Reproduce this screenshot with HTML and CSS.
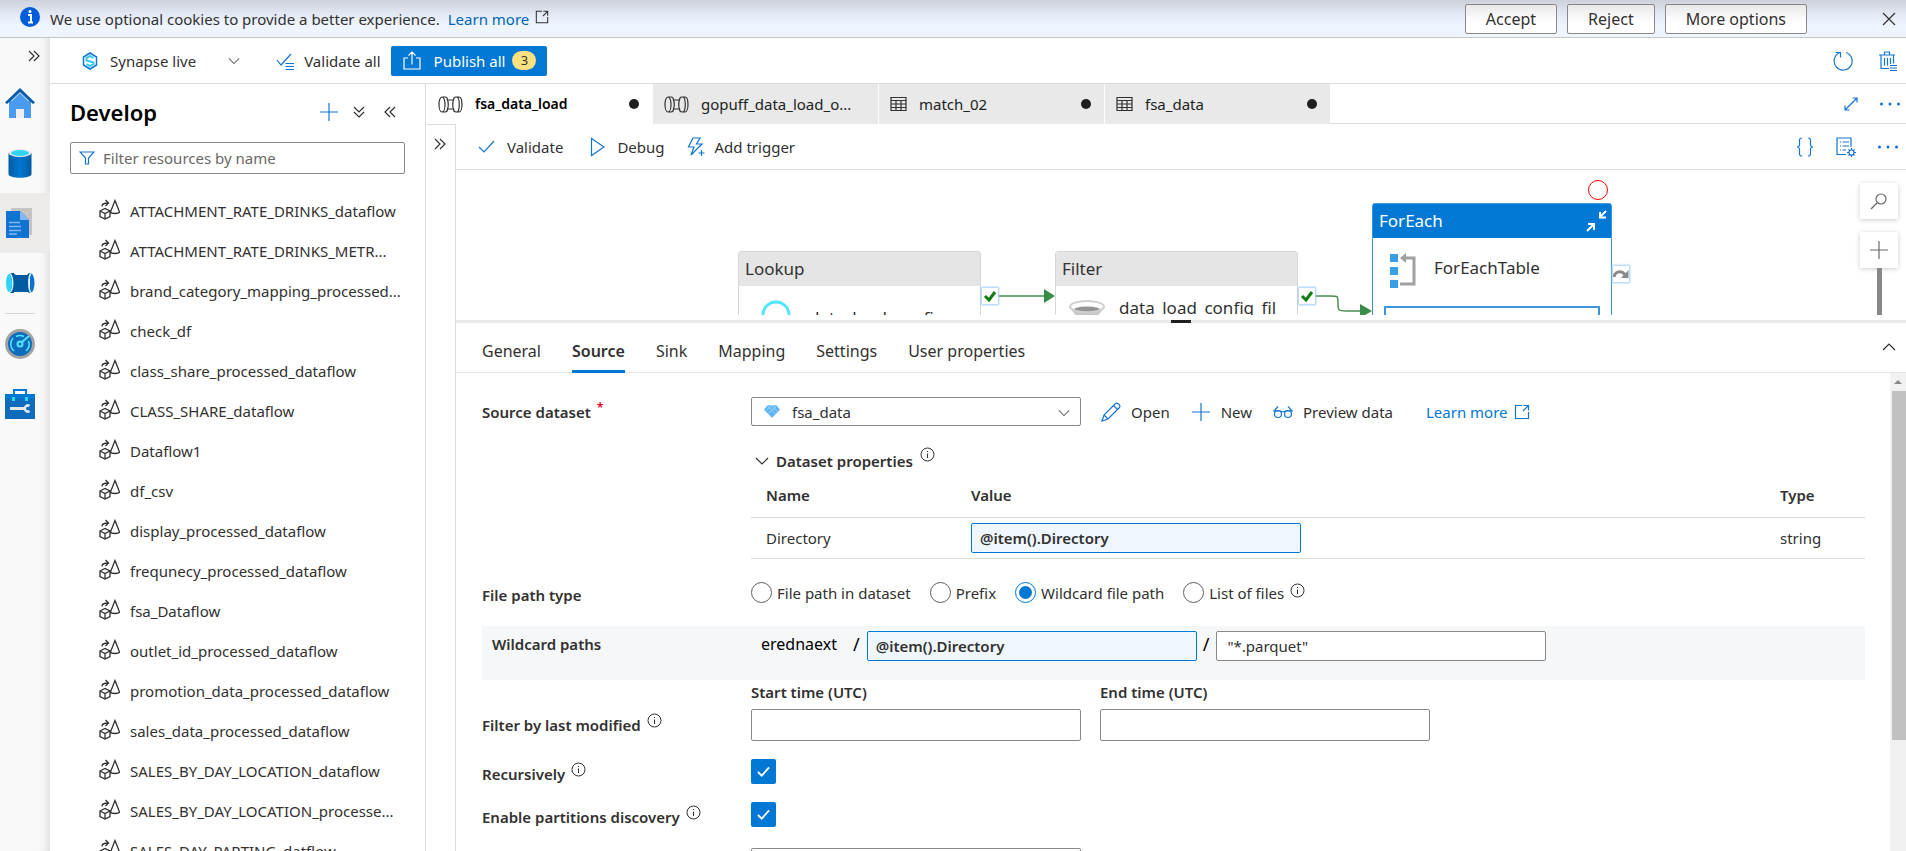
FILE: index.html
```html
<!DOCTYPE html>
<html lang="en">
<head>
    <meta charset="UTF-8">
    <meta name="viewport" content="width=device-width, initial-scale=1.0">
    <title>fsa_data_load - Synapse Analytics</title>
    <link rel="stylesheet" href="styles.css">
</head>
<body>
    <!-- Shared icons -->
    <svg class="sprite" aria-hidden="true">
        <symbol id="i-dataflow" viewBox="0 0 21 21">
            <path d="M1 12l5-2.500 5 2.500v5.500L6 20l-5-2.500zM1 12l5 2.500 5-2.500M6 14.500V20M16 1.500L11.500 13c1 2 8 2 9 0zM3 7.500c0-3 2-3.500 6-3.500M6.500 1L9.500 4 6.500 7"/>
        </symbol>
        <symbol id="i-pipeline" viewBox="0 0 25 17">
            <path d="M4 1C0 1 0 16 4 16S8 1 4 1zM4 1h3c2 0 2.500 2 2.500 3h6c0-1 .5-3 2.500-3h3c4 0 4 15 0 15h-3c-2 0-2.500-2-2.500-3h-6c0 1-.5 3-2.500 3H4M9.500 4c1 2 1 7 0 9M15.500 4c-1 2-1 7 0 9M19 1c3 1 3 14 0 15"/>
        </symbol>
        <symbol id="i-table" viewBox="0 0 17 16">
            <path d="M1 1.500h15v13H1zM1 4.500h15M1 8h15M1 11.500h15M6 4.500v10M11 4.500v10"/>
        </symbol>
        <symbol id="i-info" viewBox="0 0 15 15">
            <circle cx="7.500" cy="7.500" r="6.500"/>
            <path d="M7.500 6.500v4.500M7.500 4v1"/>
        </symbol>
        <symbol id="i-external" viewBox="0 0 16 16">
            <path d="M8 1.500H1.500v13h13V8M9.500 1.500h5v5M14.500 1.500L9 7"/>
        </symbol>
        <symbol id="i-down" viewBox="0 0 14 8">
            <path d="M1 1l6 6 6-6"/>
        </symbol>
        <symbol id="i-double" viewBox="0 0 12 12">
            <path d="M1 1l5 5-5 5M6 1l5 5-5 5"/>
        </symbol>
        <symbol id="i-plus" viewBox="0 0 20 20">
            <path d="M10 1v18M1 10h18"/>
        </symbol>
        <symbol id="i-dots" viewBox="0 0 20 4">
            <path d="M0 2a1.500 1.500 0 1 0 3 0 1.500 1.500 0 1 0-3 0M8.500 2a1.500 1.500 0 1 0 3 0 1.500 1.500 0 1 0-3 0M17 2a1.500 1.500 0 1 0 3 0 1.500 1.500 0 1 0-3 0"/>
        </symbol>
    </svg>

    <div class="cookie-bar">
        <svg class="cookie-info" viewBox="0 0 20 20">
            <circle cx="10" cy="10" r="10" fill="#015cda"/>
            <path d="M8 8h3v7M8 15.500h5" fill="none" stroke="#fff" stroke-width="2"/>
            <circle cx="10" cy="4.500" r="1.500" fill="#fff"/>
        </svg>
        <span>We use optional cookies to provide a better experience.</span>
        <a href="#" class="cookie-link">Learn more</a>
        <svg class="line-icon cookie-external"><use href="#i-external"/></svg>
        <div class="cookie-actions">
            <button type="button">Accept</button>
            <button type="button">Reject</button>
            <button type="button">More options</button>
        </div>
        <button type="button" class="icon-btn cookie-close" aria-label="Close">
            <svg class="line-icon" width="14" height="14" viewBox="0 0 14 14"><path d="M1 1l12 12M13 1L1 13"/></svg>
        </button>
    </div>

    <div class="app">
        <nav class="rail">
            <button type="button" class="rail-expand" aria-label="Expand">
                <svg class="line-icon dbl"><use href="#i-double"/></svg>
            </button>
            <a href="#" class="rail-item" aria-label="Home">
                <svg viewBox="0 0 30 30">
                    <path d="M4 13h22v17H4z" fill="#4a9af0"/>
                    <path d="M4 15L15 4l11 11v-2L15 2 4 12z" fill="#3e8ee6"/>
                    <path d="M5 15L15 5l10 10z" fill="#4a9af0"/>
                    <path d="M0 14.500L15 0l15 14.500-2 1.500L15 4 2 16z" fill="#0a5ca8"/>
                    <path d="M11 21h8v9h-8z" fill="#efefef"/>
                </svg>
            </a>
            <a href="#" class="rail-item" aria-label="Data">
                <svg viewBox="0 0 30 30">
                    <defs>
                        <linearGradient id="g-db" x1="0" x2="1"><stop offset="0" stop-color="#005ba1"/><stop offset=".5" stop-color="#0078d4"/><stop offset="1" stop-color="#005ba1"/></linearGradient>
                    </defs>
                    <path d="M3.500 5v21c0 5 23 5 23 0V5z" fill="url(#g-db)"/>
                    <ellipse cx="15" cy="5" rx="11.500" ry="4" fill="#e8e8e8"/>
                    <ellipse cx="15" cy="5" rx="9" ry="3" fill="#32d4f5"/>
                </svg>
            </a>
            <a href="#" class="rail-item selected" aria-label="Develop">
                <svg viewBox="0 0 30 30">
                    <path d="M6 0h21v27H6z" fill="#c4c4c4"/>
                    <path d="M1 3h14l9 9v18H1z" fill="#0f74d1"/>
                    <path d="M15 3l9 9h-9z" fill="#83b9f9"/>
                    <path d="M4 14.500h11M4 18.500h12M4 22.500h12M4 26h8" stroke="#83b9f9" stroke-width="1.500"/>
                </svg>
            </a>
            <a href="#" class="rail-item" aria-label="Integrate">
                <svg viewBox="0 0 30 30">
                    <path d="M9 7h14v17H9z" fill="#005ba1"/>
                    <path d="M4 5h5v20H4zM25 5c6 0 6 20 0 20z" fill="#0f74d1"/>
                    <path d="M4 5h4l3 2h11l2-2h2c-3 5-3 15 0 20h-2l-2-2H11l-3 2H4c5-4 5-16 0-20z" fill="#005ba1"/>
                    <path d="M4 5c5 3 5 17 0 20M26 5c-3 4-3 16 0 20" fill="none" stroke="#d6ecff" stroke-width="1.500"/>
                    <ellipse cx="4" cy="15" rx="3" ry="9" fill="#32d4f5"/>
                </svg>
            </a>
            <hr class="rail-line">
            <a href="#" class="rail-item" aria-label="Monitor">
                <svg viewBox="0 0 30 30">
                    <circle cx="15" cy="15" r="15" fill="#a3a3a3"/>
                    <circle cx="15" cy="15" r="12" fill="#0f6cbd"/>
                    <path d="M9 22a9 9 0 0 1-1-13M11 7.500a9 9 0 0 1 8 0M23.500 12a9 9 0 0 1-2.500 10" fill="none" stroke="#50e6ff" stroke-width="1.500"/>
                    <circle cx="15" cy="15" r="2.500" fill="none" stroke="#50e6ff" stroke-width="2"/>
                    <path d="M17 13l7-6" stroke="#50e6ff" stroke-width="2"/>
                </svg>
            </a>
            <a href="#" class="rail-item" aria-label="Manage">
                <svg viewBox="0 0 30 30">
                    <path d="M9 6V1h12v5" fill="none" stroke="#0078d4" stroke-width="2"/>
                    <path d="M0 5h30v25H0z" fill="#0f6cbd"/>
                    <path d="M0 5h30v5H0z" fill="#0078d4"/>
                    <path d="M7 8h3v4H7zM20 8h3v4h-3z" fill="#32d4f5"/>
                    <path d="M5 19.500h14" fill="none" stroke="#e6e6e6" stroke-width="3"/>
                    <path d="M24.500 17a3 3 0 1 0 0 5" fill="none" stroke="#e6e6e6" stroke-width="2.500"/>
                </svg>
            </a>
        </nav>

        <div class="main">
            <header class="topbar">
                <button type="button" class="icon-btn live-mode">
                    <svg width="16" height="18" viewBox="0 0 16 18">
                        <path d="M8 1l6.500 4v8L8 17l-6.500-4V5z" fill="#fff" stroke="#0f78d4" stroke-width="1.500"/>
                        <path d="M11.500 6L8 4 4.500 6v2.500l7 2V12L8 14l-3.500-2" fill="none" stroke="#32c8f0" stroke-width="2"/>
                    </svg>
                    <span>Synapse live</span>
                    <svg class="line-icon muted chev"><use href="#i-down"/></svg>
                </button>
                <button type="button" class="icon-btn validate-all">
                    <svg class="line-icon blue" width="18" height="18" viewBox="0 0 18 18"><path d="M1 8l4 5L15 2M9.500 11.500H18M9.500 14.500H18M9.500 17.500H18"/></svg>
                    <span>Validate all</span>
                </button>
                <button type="button" class="publish">
                    <svg class="line-icon" width="18" height="20" viewBox="0 0 18 20"><path d="M5 7H1v11h16V7h-4M9 13.500V1M5.500 4.500L9 1l3.500 3.500"/></svg>
                    <span>Publish all</span>
                    <span class="badge">3</span>
                </button>
                <div class="topbar-right">
                    <button type="button" class="icon-btn" aria-label="Refresh">
                        <svg class="line-icon blue" width="20" height="20" viewBox="0 0 20 20"><path d="M13 1.500a9 9 0 1 1-6.500.3M2.500 1.500h5v5"/></svg>
                    </button>
                    <button type="button" class="icon-btn" aria-label="Discard all">
                        <svg class="line-icon blue" width="20" height="20" viewBox="0 0 20 20"><path d="M1 4h16M6.500 4V1h5v3M3 4v13.500h8M15.500 4v8.500M6.500 7v7.500M9.500 7v7.500M12.500 7v6M12 14.500h7M12 17h7M12 19.500h7"/></svg>
                    </button>
                </div>
            </header>

            <div class="body">
                <aside class="develop">
                    <div class="develop-head">
                        <h1>Develop</h1>
                        <button type="button" class="icon-btn" aria-label="Add"><svg class="line-icon blue" width="20" height="20"><use href="#i-plus"/></svg></button>
                        <button type="button" class="icon-btn" aria-label="Expand all"><svg class="line-icon dbl turn-down"><use href="#i-double"/></svg></button>
                        <button type="button" class="icon-btn" aria-label="Collapse"><svg class="line-icon dbl turn-left"><use href="#i-double"/></svg></button>
                    </div>
                    <div class="filter">
                        <svg class="line-icon blue" width="16" height="14" viewBox="0 0 16 14"><path d="M1 1h14L9.500 7v6h-3V7z"/></svg>
                        <input type="text" placeholder="Filter resources by name" aria-label="Filter resources by name">
                    </div>
                    <ul class="tree">
                        <li><svg><use href="#i-dataflow"/></svg><span>ATTACHMENT_RATE_DRINKS_dataflow</span></li>
                        <li><svg><use href="#i-dataflow"/></svg><span>ATTACHMENT_RATE_DRINKS_METR...</span></li>
                        <li><svg><use href="#i-dataflow"/></svg><span>brand_category_mapping_processed...</span></li>
                        <li><svg><use href="#i-dataflow"/></svg><span>check_df</span></li>
                        <li><svg><use href="#i-dataflow"/></svg><span>class_share_processed_dataflow</span></li>
                        <li><svg><use href="#i-dataflow"/></svg><span>CLASS_SHARE_dataflow</span></li>
                        <li><svg><use href="#i-dataflow"/></svg><span>Dataflow1</span></li>
                        <li><svg><use href="#i-dataflow"/></svg><span>df_csv</span></li>
                        <li><svg><use href="#i-dataflow"/></svg><span>display_processed_dataflow</span></li>
                        <li><svg><use href="#i-dataflow"/></svg><span>frequnecy_processed_dataflow</span></li>
                        <li><svg><use href="#i-dataflow"/></svg><span>fsa_Dataflow</span></li>
                        <li><svg><use href="#i-dataflow"/></svg><span>outlet_id_processed_dataflow</span></li>
                        <li><svg><use href="#i-dataflow"/></svg><span>promotion_data_processed_dataflow</span></li>
                        <li><svg><use href="#i-dataflow"/></svg><span>sales_data_processed_dataflow</span></li>
                        <li><svg><use href="#i-dataflow"/></svg><span>SALES_BY_DAY_LOCATION_dataflow</span></li>
                        <li><svg><use href="#i-dataflow"/></svg><span>SALES_BY_DAY_LOCATION_processe...</span></li>
                        <li><svg><use href="#i-dataflow"/></svg><span>SALES_DAY_PARTING_datflow</span></li>
                    </ul>
                </aside>

                <div class="workspace">
                    <div class="tabs">
                        <button type="button" class="tab active"><svg class="line-icon" width="25" height="17"><use href="#i-pipeline"/></svg><span>fsa_data_load</span><i class="dot"></i></button>
                        <button type="button" class="tab"><svg class="line-icon" width="25" height="17"><use href="#i-pipeline"/></svg><span>gopuff_data_load_o...</span></button>
                        <button type="button" class="tab"><svg class="line-icon" width="17" height="16"><use href="#i-table"/></svg><span>match_02</span><i class="dot"></i></button>
                        <button type="button" class="tab"><svg class="line-icon" width="17" height="16"><use href="#i-table"/></svg><span>fsa_data</span><i class="dot"></i></button>
                        <div class="tabs-rest">
                            <button type="button" class="icon-btn" aria-label="Full screen">
                                <svg class="line-icon blue" width="14" height="14" viewBox="0 0 14 14"><path d="M1 13L13 1M8.500 1H13v4.500M1 8.500V13h4.500"/></svg>
                            </button>
                            <button type="button" class="icon-btn" aria-label="More"><svg class="dots"><use href="#i-dots"/></svg></button>
                        </div>
                    </div>

                    <div class="editor-wrap">
                        <div class="activities">
                            <button type="button" class="icon-btn" aria-label="Show activities"><svg class="line-icon dbl"><use href="#i-double"/></svg></button>
                        </div>
                        <div class="editor">
                            <div class="editor-bar">
                                <button type="button" class="icon-btn">
                                    <svg class="line-icon blue" width="17" height="14" viewBox="0 0 17 14"><path d="M1 7l5 5L16 1"/></svg>
                                    <span>Validate</span>
                                </button>
                                <button type="button" class="icon-btn">
                                    <svg class="line-icon blue" width="15" height="20" viewBox="0 0 15 20"><path d="M1.500 1.500L14 10 1.500 18.500z"/></svg>
                                    <span>Debug</span>
                                </button>
                                <button type="button" class="icon-btn trigger">
                                    <svg class="line-icon blue" width="18" height="20" viewBox="0 0 18 20"><path d="M6 1h7L9.500 7H15L4 18l3-8H1.500zM14.500 13v6M11.500 16h6"/></svg>
                                    <span>Add trigger</span>
                                </button>
                                <div class="editor-bar-right">
                                    <button type="button" class="icon-btn" aria-label="Code">
                                        <svg class="line-icon blue" width="18" height="20" viewBox="0 0 18 20"><path d="M6 1C2 1 4 5 3.500 8 3.300 9.500 2.500 10 1 10c1.500 0 2.300.5 2.500 2C4 15 2 19 6 19M12 1c4 0 2 4 2.500 7 .2 1.500 1 2 2.500 2-1.500 0-2.300.5-2.500 2-.5 3 1.500 7-2.500 7"/></svg>
                                    </button>
                                    <button type="button" class="icon-btn" aria-label="Properties">
                                        <svg class="line-icon blue" width="20" height="20" viewBox="0 0 20 20"><path d="M10 17.500H1V1h14v9M4 5h1M6.500 5H13M4 9h1M6.500 9H13M4 13h1M6.500 13H10"/><circle cx="15.500" cy="15.500" r="2.500"/><path d="M15.500 11v2M15.500 18v2M11 15.500h2M18 15.500h2M12.500 12.500l1 1M18.500 18.500l-1-1M12.500 18.500l1-1M18.500 12.500l-1 1"/></svg>
                                    </button>
                                    <button type="button" class="icon-btn" aria-label="More"><svg class="dots"><use href="#i-dots"/></svg></button>
                                </div>
                            </div>

                            <div class="canvas">
                                <svg class="links" width="1000" height="145" viewBox="0 0 1000 145">
                                    <path d="M542 126h48M859 126h15c8 0 8 0 8 7s0 8 8 8h16" fill="none" stroke="#498f52" stroke-width="1.500"/>
                                    <path d="M588 119l11 7-11 7zM904 134l12 7-12 7z" fill="#388e48"/>
                                </svg>
                                <div class="node node-lookup">
                                    <div class="node-head">Lookup</div>
                                    <div class="node-body">
                                        <svg width="30" height="40" viewBox="0 0 30 40"><circle cx="15" cy="15" r="13" fill="none" stroke="#50e6ff" stroke-width="3"/><path d="M15 28v10" stroke="#198ab3" stroke-width="3"/></svg>
                                        <span>data_load_config</span>
                                    </div>
                                </div>
                                <div class="node node-filter">
                                    <div class="node-head">Filter</div>
                                    <div class="node-body">
                                        <svg width="36" height="40" viewBox="0 0 36 40"><path d="M0 7l14 17v14h8V24L36 7z" fill="#c8c8c8"/><ellipse cx="18" cy="6.500" rx="17" ry="5.500" fill="#fff" stroke="#d0d0d0" stroke-width="2"/><path d="M5 9c4-3.500 22-3.500 26 0-5 3-21 3-26 0z" fill="#949494"/></svg>
                                        <span>data_load_config_fil ter</span>
                                    </div>
                                </div>
                                <svg class="check check-1" viewBox="0 0 16 16"><path d="M3 8l4 4 6-8" fill="none" stroke="#107c10" stroke-width="3"/></svg>
                                <svg class="check check-2" viewBox="0 0 16 16"><path d="M3 8l4 4 6-8" fill="none" stroke="#107c10" stroke-width="3"/></svg>
                                <i class="breakpoint"></i>
                                <div class="node node-foreach">
                                    <div class="node-head">
                                        <span>ForEach</span>
                                        <svg width="21" height="22" viewBox="0 0 21 22"><path d="M20 1l-6 6M14 2v5.500h6M1 21l7-7M2 14h6v6" fill="none" stroke="#fff" stroke-width="2"/></svg>
                                    </div>
                                    <div class="node-body">
                                        <svg width="26" height="35" viewBox="0 0 26 35"><path d="M0 1h8v8H0zM0 14h8v8H0zM0 27h8v8H0z" fill="#3a9be6"/><path d="M15 5h9v26H10" fill="none" stroke="#a0a0a0" stroke-width="3"/><path d="M10 5l6-5v10z" fill="#a0a0a0"/></svg>
                                        <span>ForEachTable</span>
                                    </div>
                                    <div class="node-inner"></div>
                                </div>
                                <svg class="check check-skip" viewBox="0 0 16 16"><path d="M1 11c1-6 8-7 11-2" fill="none" stroke="#8a8a8a" stroke-width="3"/><path d="M15.500 4v8H8z" fill="#8a8a8a"/></svg>
                                <div class="zoom-tools">
                                    <button type="button" aria-label="Search"><svg class="line-icon muted" width="18" height="18" viewBox="0 0 18 18"><circle cx="11" cy="7" r="5"/><path d="M7.500 10.500L1 17"/></svg></button>
                                    <button type="button" aria-label="Zoom in"><svg class="line-icon muted" width="20" height="20"><use href="#i-plus"/></svg></button>
                                    <i class="zoom-track"></i>
                                </div>
                            </div>

                            <div class="splitter"><i></i></div>

                            <div class="prop-tabs">
                                <button type="button">General</button>
                                <button type="button" class="active">Source</button>
                                <button type="button">Sink</button>
                                <button type="button">Mapping</button>
                                <button type="button">Settings</button>
                                <button type="button">User properties</button>
                                <button type="button" class="collapse" aria-label="Collapse"><svg class="line-icon chev-up"><use href="#i-down"/></svg></button>
                            </div>

                            <div class="prop-pane">
                                <form class="props">
                                    <div class="row">
                                        <label class="name" for="dataset">Source dataset <sup class="req">*</sup></label>
                                        <div class="select-box">
                                            <svg class="ds-icon" viewBox="0 0 18 14"><path d="M4 0h10l4 5-9 9-9-9z" fill="#5db4f5"/><path d="M4 1l9 9M9 0l6 7M14 1L5 9M9 0L2 6" stroke="#a5d6fb" stroke-width="1"/></svg>
                                            <select id="dataset"><option>fsa_data</option></select>
                                            <svg class="line-icon muted select-chev"><use href="#i-down"/></svg>
                                        </div>
                                        <div class="dataset-actions">
                                            <button type="button" class="icon-btn">
                                                <svg class="line-icon blue" width="20" height="20" viewBox="0 0 20 20"><path d="M1 19l2-6L14.500 1.500c2-1.500 5.500 2 4 4L7 17zM12.500 3.500l4 4M3 13l4 4"/></svg>
                                                <span>Open</span>
                                            </button>
                                            <button type="button" class="icon-btn">
                                                <svg class="line-icon blue" width="20" height="20"><use href="#i-plus"/></svg>
                                                <span>New</span>
                                            </button>
                                            <button type="button" class="icon-btn">
                                                <svg class="line-icon blue" width="20" height="14" viewBox="0 0 20 14"><circle cx="5" cy="9" r="3.500"/><circle cx="15" cy="9" r="3.500"/><path d="M0 6h7c1 1 5 1 6 0h7M1 6l4-4.500M19 6l-4-4.500"/></svg>
                                                <span>Preview data</span>
                                            </button>
                                            <a href="#" class="learn">Learn more <svg class="line-icon blue" width="16" height="16"><use href="#i-external"/></svg></a>
                                        </div>
                                    </div>

                                    <div class="dataset-props">
                                        <div class="section-title">
                                            <svg class="line-icon chev"><use href="#i-down"/></svg>
                                            <span>Dataset properties</span>
                                            <svg class="line-icon info"><use href="#i-info"/></svg>
                                        </div>
                                        <table>
                                            <thead>
                                                <tr><th class="col-name">Name</th><th>Value</th><th class="col-type">Type</th></tr>
                                            </thead>
                                            <tbody>
                                                <tr>
                                                    <td class="col-name">Directory</td>
                                                    <td><input type="text" class="field expr" value="@item().Directory" aria-label="Directory"></td>
                                                    <td class="col-type">string</td>
                                                </tr>
                                            </tbody>
                                        </table>
                                    </div>

                                    <div class="row row-radio" role="radiogroup" aria-labelledby="path-type">
                                        <span class="name" id="path-type">File path type</span>
                                        <label class="radio"><input type="radio" name="path">File path in dataset</label>
                                        <label class="radio"><input type="radio" name="path">Prefix</label>
                                        <label class="radio"><input type="radio" name="path" checked>Wildcard file path</label>
                                        <label class="radio"><input type="radio" name="path">List of files</label>
                                        <svg class="line-icon info"><use href="#i-info"/></svg>
                                    </div>

                                    <div class="row row-wildcard">
                                        <label class="name" for="folder">Wildcard paths</label>
                                        <span class="container-name">erednaext</span>
                                        <span class="slash">/</span>
                                        <input type="text" class="field expr" id="folder" value="@item().Directory">
                                        <span class="slash">/</span>
                                        <input type="text" class="field" value="&quot;*.parquet&quot;" aria-label="Wildcard file name">
                                    </div>

                                    <div class="row row-dates">
                                        <span class="name">Filter by last modified <svg class="line-icon info"><use href="#i-info"/></svg></span>
                                        <div class="date">
                                            <label for="start">Start time (UTC)</label>
                                            <input type="text" class="field" id="start">
                                        </div>
                                        <div class="date">
                                            <label for="end">End time (UTC)</label>
                                            <input type="text" class="field" id="end">
                                        </div>
                                    </div>

                                    <div class="row row-check">
                                        <label class="name" for="recursive">Recursively <svg class="line-icon info"><use href="#i-info"/></svg></label>
                                        <span class="tick"><input type="checkbox" id="recursive" checked><svg viewBox="0 0 14 12"><path d="M1 6l4 4 8-9"/></svg></span>
                                    </div>
                                    <div class="row row-check">
                                        <label class="name" for="discovery">Enable partitions discovery <svg class="line-icon info"><use href="#i-info"/></svg></label>
                                        <span class="tick"><input type="checkbox" id="discovery" checked><svg viewBox="0 0 14 12"><path d="M1 6l4 4 8-9"/></svg></span>
                                    </div>
                                    <div class="row row-root">
                                        <input type="text" class="field" aria-label="Partition root path">
                                    </div>
                                </form>
                                <div class="scrollbar"><i class="arrow"></i><i class="thumb"></i></div>
                            </div>
                        </div>
                    </div>
                </div>
            </div>
        </div>
    </div>
</body>
</html>
```

FILE: styles.css
```css
* {
    box-sizing: border-box;
}
body {
    margin: 0;
    height: 100vh;
    display: flex;
    flex-direction: column;
    overflow: hidden;
    font-family: "Segoe UI", "Noto Sans", "Open Sans", sans-serif;
    font-size: 15px;
    line-height: 20px;
    color: #323130;
    background: #fff;
}
button, input, select {
    font: inherit;
    color: inherit;
}
button {
    cursor: pointer;
}
a {
    color: #0078d4;
    text-decoration: none;
}
svg {
    flex: none;
    display: block;
}
.sprite {
    position: absolute;
    width: 0;
    height: 0;
}
.line-icon {
    fill: none;
    stroke: #323130;
    stroke-width: 1.2;
}
.line-icon.blue {
    stroke: #1474d4;
}
.line-icon.muted {
    stroke: #6b6967;
}
.icon-btn {
    display: flex;
    align-items: center;
    padding: 0;
    border: none;
    background: none;
}
.dbl {
    width: 12px;
    height: 12px;
}
.turn-down {
    transform: rotate(90deg);
}
.turn-left {
    transform: rotate(180deg);
}
.chev {
    width: 14px;
    height: 8px;
}
.info {
    width: 15px;
    height: 15px;
    stroke-width: 1;
}
.dots {
    width: 20px;
    height: 4px;
    fill: #1474d4;
}

/* Cookie bar */
.cookie-bar {
    display: flex;
    align-items: center;
    height: 38px;
    padding: 0 10px 0 20px;
    border-bottom: 1px solid #c8c6c4;
    background: linear-gradient(#cdd1dc, #e4eaf5 40%, #eff5ff 70%);
}
.cookie-info {
    width: 20px;
    height: 20px;
    margin: 0 10px 4px 0;
}
.cookie-link {
    margin: 0 6px 0 8px;
    color: #0067b8;
}
.cookie-external {
    width: 14px;
    height: 14px;
    margin-bottom: 4px;
}
.cookie-actions {
    display: flex;
    gap: 10px;
    margin: 0 75px 0 auto;
}
.cookie-actions button {
    height: 30px;
    padding: 0 20px;
    border: 1px solid #8a8886;
    border-radius: 2px;
    background: linear-gradient(#e8e8e8, #fff 60%);
    font-size: 16px;
}

/* Left rail */
.app {
    flex: 1;
    display: flex;
    min-height: 0;
}
.rail {
    width: 50px;
    flex: none;
    background: #faf9f9;
    box-shadow: inset -8px 0 8px -6px #d8d8d8;
}
.rail-expand {
    display: block;
    height: 35px;
    padding: 0 0 0 28px;
    border: none;
    background: none;
}
.rail-item {
    display: flex;
    align-items: center;
    height: 60px;
    padding-left: 5px;
}
.rail-item svg {
    width: 30px;
    height: 30px;
}
.rail-item.selected {
    background: #edebe9;
}
.rail-line {
    width: 30px;
    margin: 0 0 0 5px;
    border: none;
    border-top: 1px solid #d6d6d6;
}
.main {
    flex: 1;
    min-width: 0;
    display: flex;
    flex-direction: column;
}

/* Top bar */
.topbar {
    display: flex;
    align-items: center;
    height: 46px;
    padding: 0 8px 0 32px;
    border-bottom: 1px solid #dcdcdc;
}
.live-mode {
    gap: 12px;
    margin-right: 36px;
}
.live-mode .chev {
    margin-left: 20px;
    width: 12px;
}
.validate-all {
    gap: 10px;
    margin-right: 10px;
}
.publish {
    display: flex;
    align-items: center;
    height: 30px;
    padding: 0 11px 0 12px;
    border: none;
    border-radius: 2px;
    background: #0078d4;
    color: #fff;
}
.publish .line-icon {
    stroke: #fff;
    margin-right: 13px;
}
.badge {
    width: 24px;
    margin-left: 7px;
    border-radius: 10px;
    background: #fbe17f;
    color: #323130;
    font-size: 13px;
    line-height: 19px;
}
.topbar-right {
    display: flex;
    gap: 25px;
    margin-left: auto;
}
.body {
    flex: 1;
    display: flex;
    min-height: 0;
}

/* Develop panel */
.develop {
    width: 376px;
    flex: none;
    overflow: hidden;
    border-right: 1px solid #dcdcdc;
    padding: 14px 20px 0;
}
.develop-head {
    display: flex;
    align-items: center;
    height: 27px;
    padding-right: 9px;
}
.develop-head h1 {
    flex: 1;
    margin: 0;
    font-size: 22px;
    font-weight: 600;
    line-height: 32px;
    color: #000;
}
.develop-head .icon-btn {
    margin-left: 14px;
}
.develop-head .icon-btn:last-child {
    margin-left: 19px;
}
.filter {
    display: flex;
    align-items: center;
    gap: 8px;
    height: 32px;
    margin-top: 17px;
    padding: 0 8px;
    border: 1px solid #8a8886;
    border-radius: 2px;
}
.filter input {
    flex: 1;
    min-width: 0;
    padding: 0;
    border: none;
    outline: none;
}
.filter input::placeholder {
    color: #6b6967;
}
.tree {
    margin: 17px 0 0;
    padding: 0 0 0 29px;
    list-style: none;
}
.tree li {
    display: flex;
    align-items: center;
    gap: 10px;
    height: 40px;
    white-space: nowrap;
}
.tree svg {
    width: 21px;
    height: 21px;
    margin-bottom: 4px;
    fill: none;
    stroke: #323130;
    stroke-width: 1.3;
}

/* Document tabs */
.workspace {
    flex: 1;
    min-width: 0;
    display: flex;
    flex-direction: column;
}
.tabs {
    display: flex;
    height: 40px;
}
.tab {
    display: flex;
    align-items: center;
    gap: 12px;
    width: 226px;
    padding: 0 13px 0 11px;
    border: none;
    border-left: 1px solid #fff;
    background: #e9e9e9;
    color: #201f1e;
}
.tab.active {
    background: #fff;
    color: #000;
    font-size: 14px;
    font-weight: 600;
}
.dot {
    width: 10px;
    height: 10px;
    margin-left: auto;
    border-radius: 50%;
    background: #201f1e;
}
.tabs-rest {
    flex: 1;
    display: flex;
    align-items: center;
    justify-content: flex-end;
    gap: 22px;
    padding-right: 6px;
    border-bottom: 1px solid #dcdcdc;
}
.editor-wrap {
    flex: 1;
    display: flex;
    min-height: 0;
}
.activities {
    width: 30px;
    flex: none;
    padding: 13px 0 0 8px;
    border-top: 1px solid #dcdcdc;
    border-right: 1px solid #dcdcdc;
}
.editor {
    flex: 1;
    min-width: 0;
    display: flex;
    flex-direction: column;
}
.editor-bar {
    display: flex;
    align-items: center;
    gap: 27px;
    flex: none;
    height: 46px;
    padding: 0 8px 0 22px;
    border-bottom: 1px solid #dcdcdc;
}
.editor-bar .icon-btn {
    gap: 12px;
}
.editor-bar .trigger {
    gap: 10px;
    margin-left: -5px;
}
.editor-bar-right {
    display: flex;
    align-items: center;
    gap: 22px;
    margin-left: auto;
}

/* Pipeline canvas */
.canvas {
    position: relative;
    flex: none;
    height: 145px;
    overflow: hidden;
    font-size: 17px;
}
.links {
    position: absolute;
    left: 0;
    top: 0;
}
.node {
    position: absolute;
    width: 243px;
    height: 130px;
    border: 1px solid #d6d6d6;
    border-radius: 3px;
    background: #fff;
}
.node-head {
    display: flex;
    align-items: center;
    justify-content: space-between;
    height: 34px;
    padding: 0 4px 0 6px;
    background: #e5e5e5;
}
.node-body {
    display: flex;
    align-items: flex-start;
}
.node-lookup {
    left: 282px;
    top: 81px;
}
.node-lookup .node-body {
    gap: 18px;
    padding: 14px 22px;
}
.node-lookup .node-body span {
    margin-top: 8px;
}
.node-filter {
    left: 599px;
    top: 81px;
}
.node-filter .node-body {
    gap: 14px;
    padding: 14px 13px;
}
.node-filter .node-body span {
    margin-top: -2px;
}
.node-foreach {
    left: 916px;
    top: 33px;
    width: 240px;
    height: 200px;
    border-color: #3a96dd;
}
.node-foreach .node-head {
    background: #0078d4;
    color: #fff;
}
.node-foreach .node-body {
    gap: 18px;
    padding: 15px 17px 18px;
}
.node-foreach .node-body span {
    margin-top: 5px;
}
.node-inner {
    height: 90px;
    margin: 0 11px;
    border: 2px solid #3a96dd;
}
.check {
    position: absolute;
    width: 16px;
    height: 16px;
    background: #fff;
    box-shadow: 0 0 2px 1px #9ccbf2;
}
.check-1 {
    left: 526px;
    top: 118px;
}
.check-2 {
    left: 843px;
    top: 118px;
}
.check-skip {
    left: 1157px;
    top: 96px;
}
.breakpoint {
    position: absolute;
    left: 1132px;
    top: 10px;
    width: 20px;
    height: 20px;
    border: 1px solid #f00;
    border-radius: 50%;
}
.zoom-tools {
    position: absolute;
    right: 8px;
    top: 13px;
    display: flex;
    flex-direction: column;
    align-items: center;
}
.zoom-tools button {
    display: flex;
    align-items: center;
    justify-content: center;
    width: 38px;
    height: 36px;
    margin-bottom: 13px;
    padding: 0;
    border: none;
    background: #fff;
    box-shadow: 0 1px 5px rgba(0, 0, 0, 0.2);
}
.zoom-track {
    width: 5px;
    height: 60px;
    margin-top: -13px;
    background: #8a8886;
}
.splitter {
    flex: none;
    height: 3px;
    margin-top: 5px;
    background: #eaeaea;
}
.splitter i {
    display: block;
    width: 20px;
    height: 3px;
    margin: 0 auto;
    background: #201f1e;
}

/* Properties */
.prop-tabs {
    display: flex;
    gap: 31px;
    flex: none;
    height: 50px;
    padding: 0 10px 0 26px;
    border-bottom: 1px solid #e5e5e5;
    font-size: 16px;
}
.prop-tabs button {
    height: 50px;
    padding: 9px 0 0;
    border: none;
    border-bottom: 3px solid transparent;
    background: none;
}
.prop-tabs .active {
    border-color: #0078d4;
    font-weight: 600;
}
.prop-tabs .collapse {
    margin-left: auto;
    padding: 0;
}
.chev-up {
    width: 14px;
    height: 8px;
    transform: rotate(180deg);
}
.prop-pane {
    flex: 1;
    display: flex;
    min-height: 0;
}
.props {
    flex: 1;
    min-width: 0;
    padding: 24px 25px 0 26px;
    overflow: hidden;
}
.row {
    display: flex;
    align-items: center;
}
.name {
    display: flex;
    flex: none;
    gap: 6px;
    width: 269px;
    font-weight: 600;
}
.name .info {
    margin-top: -2px;
}
.req {
    line-height: 12px;
    color: #e00b1c;
}
.select-box {
    position: relative;
    width: 330px;
}
.select-box select {
    display: block;
    width: 100%;
    height: 29px;
    padding: 0 40px;
    border: 1px solid #8a8886;
    border-radius: 2px;
    background: #fff;
    appearance: none;
}
.ds-icon {
    position: absolute;
    left: 13px;
    top: 8px;
    width: 16px;
    height: 13px;
}
.select-chev {
    position: absolute;
    right: 11px;
    top: 12px;
    width: 12px;
    height: 8px;
}
.dataset-actions {
    display: flex;
    align-items: center;
    gap: 21px;
    margin-left: 20px;
}
.dataset-actions .icon-btn {
    gap: 10px;
}
.learn {
    display: flex;
    align-items: center;
    gap: 6px;
    margin-left: 12px;
}
.dataset-props {
    margin: 25px 0 0 269px;
}
.section-title {
    display: flex;
    align-items: center;
    gap: 7px;
    height: 20px;
    padding-left: 4px;
    font-weight: 600;
}
.section-title .info {
    margin-bottom: 14px;
}
.dataset-props table {
    width: 100%;
    margin-top: 3px;
    border-collapse: collapse;
    table-layout: fixed;
}
.dataset-props th {
    height: 43px;
    padding: 0;
    border-bottom: 1px solid #dcdcdc;
    font-weight: 600;
    text-align: left;
}
.dataset-props td {
    height: 41px;
    padding: 0;
    border-bottom: 1px solid #dcdcdc;
}
.dataset-props .col-name {
    width: 220px;
    padding-left: 15px;
}
.dataset-props .col-type {
    width: 85px;
}
.field {
    display: block;
    width: 330px;
    height: 30px;
    padding: 0 10px;
    border: 1px solid #8a8886;
    border-radius: 2px;
    background: #fff;
}
.field.expr {
    padding: 0 8px;
    border-color: #0078d4;
    background: #eff6fe;
    font-weight: 600;
}
.row-radio {
    height: 22px;
    margin-top: 23px;
}
.row-radio .name, .row-check .name {
    padding-top: 5px;
}
.radio {
    display: flex;
    align-items: center;
    gap: 5px;
    margin-right: 19px;
}
.radio input {
    appearance: none;
    display: grid;
    place-items: center;
    width: 21px;
    height: 21px;
    margin: 0;
    border: 1px solid #605e5c;
    border-radius: 50%;
}
.radio input:checked {
    border-color: #0078d4;
}
.radio input:checked::before {
    content: "";
    width: 13px;
    height: 13px;
    border-radius: 50%;
    background: #0078d4;
}
.row-radio .info {
    margin: 0 0 4px -13px;
}
.row-wildcard {
    align-items: flex-start;
    margin-top: 22px;
    padding: 5px 0 19px 10px;
    background: #f6f7f9;
    line-height: 26px;
}
.container-name {
    width: 92px;
    font-size: 16px;
    color: #000;
}
.slash {
    margin-right: 7px;
    font-size: 18px;
    color: #000;
}
.field + .slash {
    margin-left: 6px;
}
.row-dates {
    align-items: flex-end;
    padding-top: 2px;
}
.row-dates .name {
    line-height: 32px;
}
.row-dates .info {
    margin-top: 4px;
}
.date {
    margin-right: 19px;
}
.date label {
    display: block;
    margin-bottom: 7px;
    font-weight: 600;
}
.date .field {
    height: 32px;
}
.row-check {
    margin-top: 18px;
}
.tick {
    position: relative;
    width: 25px;
    height: 25px;
}
.tick input {
    appearance: none;
    display: block;
    width: 25px;
    height: 25px;
    margin: 0;
    border-radius: 2px;
    background: #0078d4;
}
.tick svg {
    position: absolute;
    left: 6px;
    top: 7px;
    width: 13px;
    height: 12px;
    fill: none;
    stroke: #fff;
    stroke-width: 2;
    pointer-events: none;
}
.row-root {
    margin-top: 21px;
    padding-left: 269px;
}
.scrollbar {
    width: 16px;
    flex: none;
    background: #f1f1f1;
}
.scrollbar .arrow {
    display: block;
    width: 8px;
    margin: 7px auto 7px;
    border: 4px solid transparent;
    border-top: none;
    border-bottom: 4px solid #8a8886;
}
.scrollbar .thumb {
    display: block;
    height: 73%;
    margin-left: 2px;
    background: #c1c1c1;
}
```
